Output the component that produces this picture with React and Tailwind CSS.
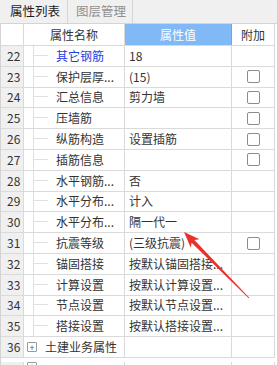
import React from 'react';

const rows = [
    { no: 22, name: '其它钢筋', value: '18', blue: true },
    { no: 23, name: '保护层厚...', value: '(15)', check: true },
    { no: 24, name: '汇总信息', value: '剪力墙', check: true },
    { no: 25, name: '压墙筋', value: '', check: true },
    { no: 26, name: '纵筋构造', value: '设置插筋', check: true },
    { no: 27, name: '插筋信息', value: '', check: true },
    { no: 28, name: '水平钢筋...', value: '否' },
    { no: 29, name: '水平分布...', value: '计入' },
    { no: 30, name: '水平分布...', value: '隔一代一' },
    { no: 31, name: '抗震等级', value: '(三级抗震)', check: true },
    { no: 32, name: '锚固搭接', value: '按默认锚固搭接...' },
    { no: 33, name: '计算设置', value: '按默认计算设置...' },
    { no: 34, name: '节点设置', value: '按默认节点设置...' },
    { no: 35, name: '搭接设置', value: '按默认搭接设置...' },
];

const Checkbox = () => (
    <div className="w-[13px] h-[13px] border border-[#8c8c8c] rounded-[2px] bg-white" />
);

const PlusBox = () => (
    <div className="w-[10px] h-[10px] border border-[#9a9a9a] rounded-[1px] flex items-center justify-center text-[9px] leading-none text-[#555]">
        +
    </div>
);

const Row = ({ children }) => (
    <div className="flex h-[20.8px] border-b border-[#dadada]">{children}</div>
);

const App = () => {
    return (
        <div
            className="relative w-[277px] h-[365px] overflow-hidden bg-white text-[12px] text-[#333]"
            style={{ fontFamily: '"Noto Sans CJK SC", "Noto Sans", sans-serif' }}
        >
            {/* Tabs */}
            <div className="flex h-[24px] bg-[#f0f0f0] border-b border-[#d4d4d4] text-[12.5px]">
                <div className="w-[68px] flex items-center pl-[10px] border-r border-[#d4d4d4] text-[#1e1e1e]">属性列表</div>
                <div className="w-[65px] flex items-center pl-[8px] border-r border-[#d4d4d4] text-[#8f8f8f]">图层管理</div>
            </div>

            {/* Grid */}
            <div className="w-[275px] border-l border-[#d4d4d4]">
                {/* Header */}
                <div className="flex h-[22px] border-b border-[#dadada]">
                    <div className="w-[23px] border-r border-[#dadada]" />
                    <div className="w-[101px] flex items-center justify-center border-r border-[#dadada]">属性名称</div>
                    <div className="w-[107px] flex items-center justify-center bg-[#80b9f5] text-white border-r border-[#6aa8ea]">属性值</div>
                    <div className="w-[43px] flex items-center justify-center border-r border-[#dadada]">附加</div>
                </div>

                {rows.map((r) => (
                    <Row key={r.no}>
                        <div className="w-[23px] flex items-center pl-[6px] bg-[#f0f0f0] border-r border-[#dadada]">{r.no}</div>
                        <div className="w-[101px] flex items-stretch pl-[9px] border-r border-[#dadada]">
                            <div className="w-[15px] border-l border-[#e0e0e0] flex flex-col">
                                <div className="h-1/2 border-b border-[#e0e0e0]" />
                            </div>
                            <div className={'ml-[8px] flex items-center whitespace-nowrap ' + (r.blue ? 'text-[#1d3fe0]' : '')}>{r.name}</div>
                        </div>
                        <div className="w-[107px] flex items-center pl-[4px] whitespace-nowrap overflow-hidden border-r border-[#dadada]">{r.value}</div>
                        <div className="w-[43px] flex items-center justify-center border-r border-[#dadada]">
                            {r.check && <Checkbox />}
                        </div>
                    </Row>
                ))}

                {/* Group row */}
                <Row>
                    <div className="w-[23px] flex items-center pl-[6px] bg-[#f0f0f0] border-r border-[#dadada]">36</div>
                    <div className="w-[101px] flex items-center pl-[3px] gap-[8px] whitespace-nowrap border-r border-[#dadada]">
                        <PlusBox />
                        <span>土建业务属性</span>
                    </div>
                    <div className="w-[107px] border-r border-[#dadada]" />
                    <div className="w-[43px] border-r border-[#dadada]" />
                </Row>

                {/* Next group row, only its top is in view */}
                <div className="flex h-[20.8px] pt-[4px]">
                    <div className="w-[23px] bg-[#f0f0f0] border-r border-[#dadada]" />
                    <div className="w-[101px] pl-[3px] border-r border-[#dadada]">
                        <PlusBox />
                    </div>
                    <div className="w-[107px] border-r border-[#dadada]" />
                    <div className="w-[43px] border-r border-[#dadada]" />
                </div>
            </div>

            {/* Annotation arrow */}
            <svg className="absolute inset-0 pointer-events-none" width="277" height="365" viewBox="0 0 277 365">
                <polygon
                    points="184,232 199.4,239.3 194.4,239.9 249.3,297.8 248.7,298.3 191.6,242.7 190.8,247.7"
                    fill="#e8322b"
                />
            </svg>
        </div>
    );
};

export default App;
